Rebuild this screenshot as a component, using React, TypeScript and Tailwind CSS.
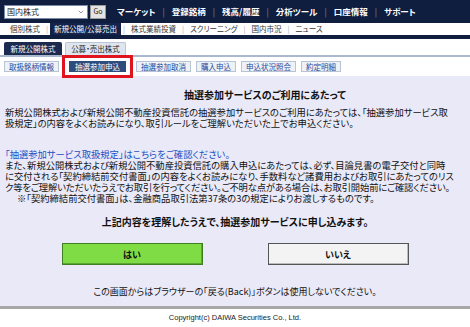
import { ChevronDown } from "lucide-react";

const topMenu = ["マーケット", "登録銘柄", "残高/履歴", "分析ツール", "口座情報", "サポート"];
const subMenu = ["個別株式", "新規公開/公募売出", "株式業績投資", "スクリーニング", "国内市況", "ニュース"];
const actions = ["取扱銘柄情報", "抽選参加申込", "抽選参加取消", "購入申込", "申込状況照会", "約定明細"];

const App = () => {
  return (
    <div
      className="w-[470px] h-[327px] overflow-hidden bg-white text-[#111] [font-feature-settings:'palt']"
      style={{ fontFamily: '"Noto Sans CJK JP", "Liberation Sans", sans-serif' }}
    >
      {/* Top nav */}
      <div className="h-[23px] bg-[#0f1d3f] flex items-center pl-[4px]">
        <div className="w-[84px] h-[14px] bg-white border border-[#7a8aa8] flex items-center justify-between px-[2px] text-[8px] leading-none text-[#222]">
          <span>国内株式</span>
          <ChevronDown className="w-[8px] h-[8px] text-[#666]" />
        </div>
        <div className="ml-[2px] w-[16px] h-[14px] bg-[#e4e4e4] border border-[#999] text-[7px] leading-none flex items-center justify-center text-[#222]">
          Go
        </div>
        <div className="flex items-center ml-[11px] text-[8.5px] leading-none text-white font-bold">
          {topMenu.map((m, i) => (
            <div key={m} className="flex items-center">
              {i > 0 && <span className="mx-[7px] text-[#8090b0] font-normal">|</span>}
              <span>{m}</span>
            </div>
          ))}
        </div>
      </div>
      {/* Second nav */}
      <div className="h-[12px] bg-white flex items-stretch pl-[10px] text-[7.5px] leading-none text-[#333]">
        {subMenu.map((m, i) => (
          <div key={m} className="flex items-center">
            {i > 0 && <span className="mx-[6px] text-[#aaa]">|</span>}
            <span
              className={
                i === 1
                  ? "bg-[#13234b] text-white h-full flex items-center px-[4px] -mx-[4px]"
                  : ""
              }
            >
              {m}
            </span>
          </div>
        ))}
      </div>
      <div className="h-[4px] bg-[#0f1d3f]" />
      {/* Tabs */}
      <div className="flex items-end gap-[3px] pl-[4px] pt-[3px] h-[16px]">
        <div className="h-[13px] w-[58px] bg-[#1b2a4e] text-white text-[7.5px] leading-none flex items-center justify-center rounded-t-[2px]">
          新規公開株式
        </div>
        <div className="h-[13px] w-[61px] bg-[#dfe5ee] border border-b-0 border-[#b9c4d4] text-[#222] text-[7.5px] leading-none flex items-center justify-center rounded-t-[2px]">
          公募・売出株式
        </div>
      </div>
      <div className="h-[2px] bg-[#a9b8cc]" />
      {/* Action buttons */}
      <div className="h-[19px] flex items-center pl-[4px] gap-[5px] text-[7.5px] leading-none">
        {actions.map((a, i) =>
          i === 1 ? (
            <div key={a} className="border-[3px] border-[#e0141e] px-[4px] py-[3px] -my-[4px] -mx-[2px]">
              <div className="h-[11px] px-[6px] bg-[#2e4c7c] text-white flex items-center">{a}</div>
            </div>
          ) : (
            <div
              key={a}
              className="h-[11px] px-[4px] bg-[#eef1f6] border border-[#b8c4d4] text-[#1d4aa0] flex items-center"
            >
              {a}
            </div>
          )
        )}
      </div>
      {/* Content */}
      <div className="h-[230px] bg-[#e9e9f8] pt-[13px] px-[5px] text-[9.3px] leading-[11px]">
        <div className="text-center font-bold text-[10px] pl-[60px]">抽選参加サービスのご利用にあたって</div>
        <div className="mt-[7px] whitespace-nowrap">
          <div>新規公開株式および新規公開不動産投資信託の抽選参加サービスのご利用にあたっては、「抽選参加サービス取</div>
          <div>扱規定」の内容をよくお読みになり、取引ルールをご理解いただいた上でお申込ください。</div>
        </div>
        <div className="mt-[20px] text-[#1d4fc4]">「抽選参加サービス取扱規定」はこちらをご確認ください。</div>
        <div className="whitespace-nowrap">
          <div>また、新規公開株式および新規公開不動産投資信託の購入申込にあたっては、必ず、目論見書の電子交付と同時</div>
          <div>に交付される「契約締結前交付書面」の内容をよくお読みになり、手数料など諸費用およびお取引にあたってのリス</div>
          <div className="tracking-[-0.15px]">ク等をご理解いただいたうえでお取引を行ってください。ご不明な点がある場合は、お取引開始前にご確認ください。</div>
          <div className="pl-[12px]">※「契約締結前交付書面」は、金融商品取引法第37条の3の規定によりお渡しするものです。</div>
        </div>
        <div className="mt-[12px] text-center font-bold text-[10px]">上記内容を理解したうえで、抽選参加サービスに申し込みます。</div>
        <div className="mt-[16px] flex justify-center gap-[65px]">
          <button className="w-[141px] h-[22px] bg-[#80dc44] border border-[#3f7f22] shadow-[inset_-1px_-1px_0_#5aa830] font-bold text-[9px]">
            はい
          </button>
          <button className="w-[141px] h-[22px] bg-[#f3f3f3] border border-[#555] shadow-[inset_-1px_-1px_0_#bbb] font-bold text-[9px]">
            いいえ
          </button>
        </div>
        <div className="mt-[21px] text-center text-[9px]">この画面からはブラウザーの「戻る(Back)」ボタンは使用しないでください。</div>
      </div>
      <div className="h-[3px] bg-[#a8a8a8]" />
      <div className="pt-[3px] text-center text-[7.5px] text-[#222]" style={{ fontFamily: '"Liberation Sans", sans-serif' }}>
        Copyright(c) DAIWA Securities Co., Ltd.
      </div>
    </div>
  );
};

export default App;
